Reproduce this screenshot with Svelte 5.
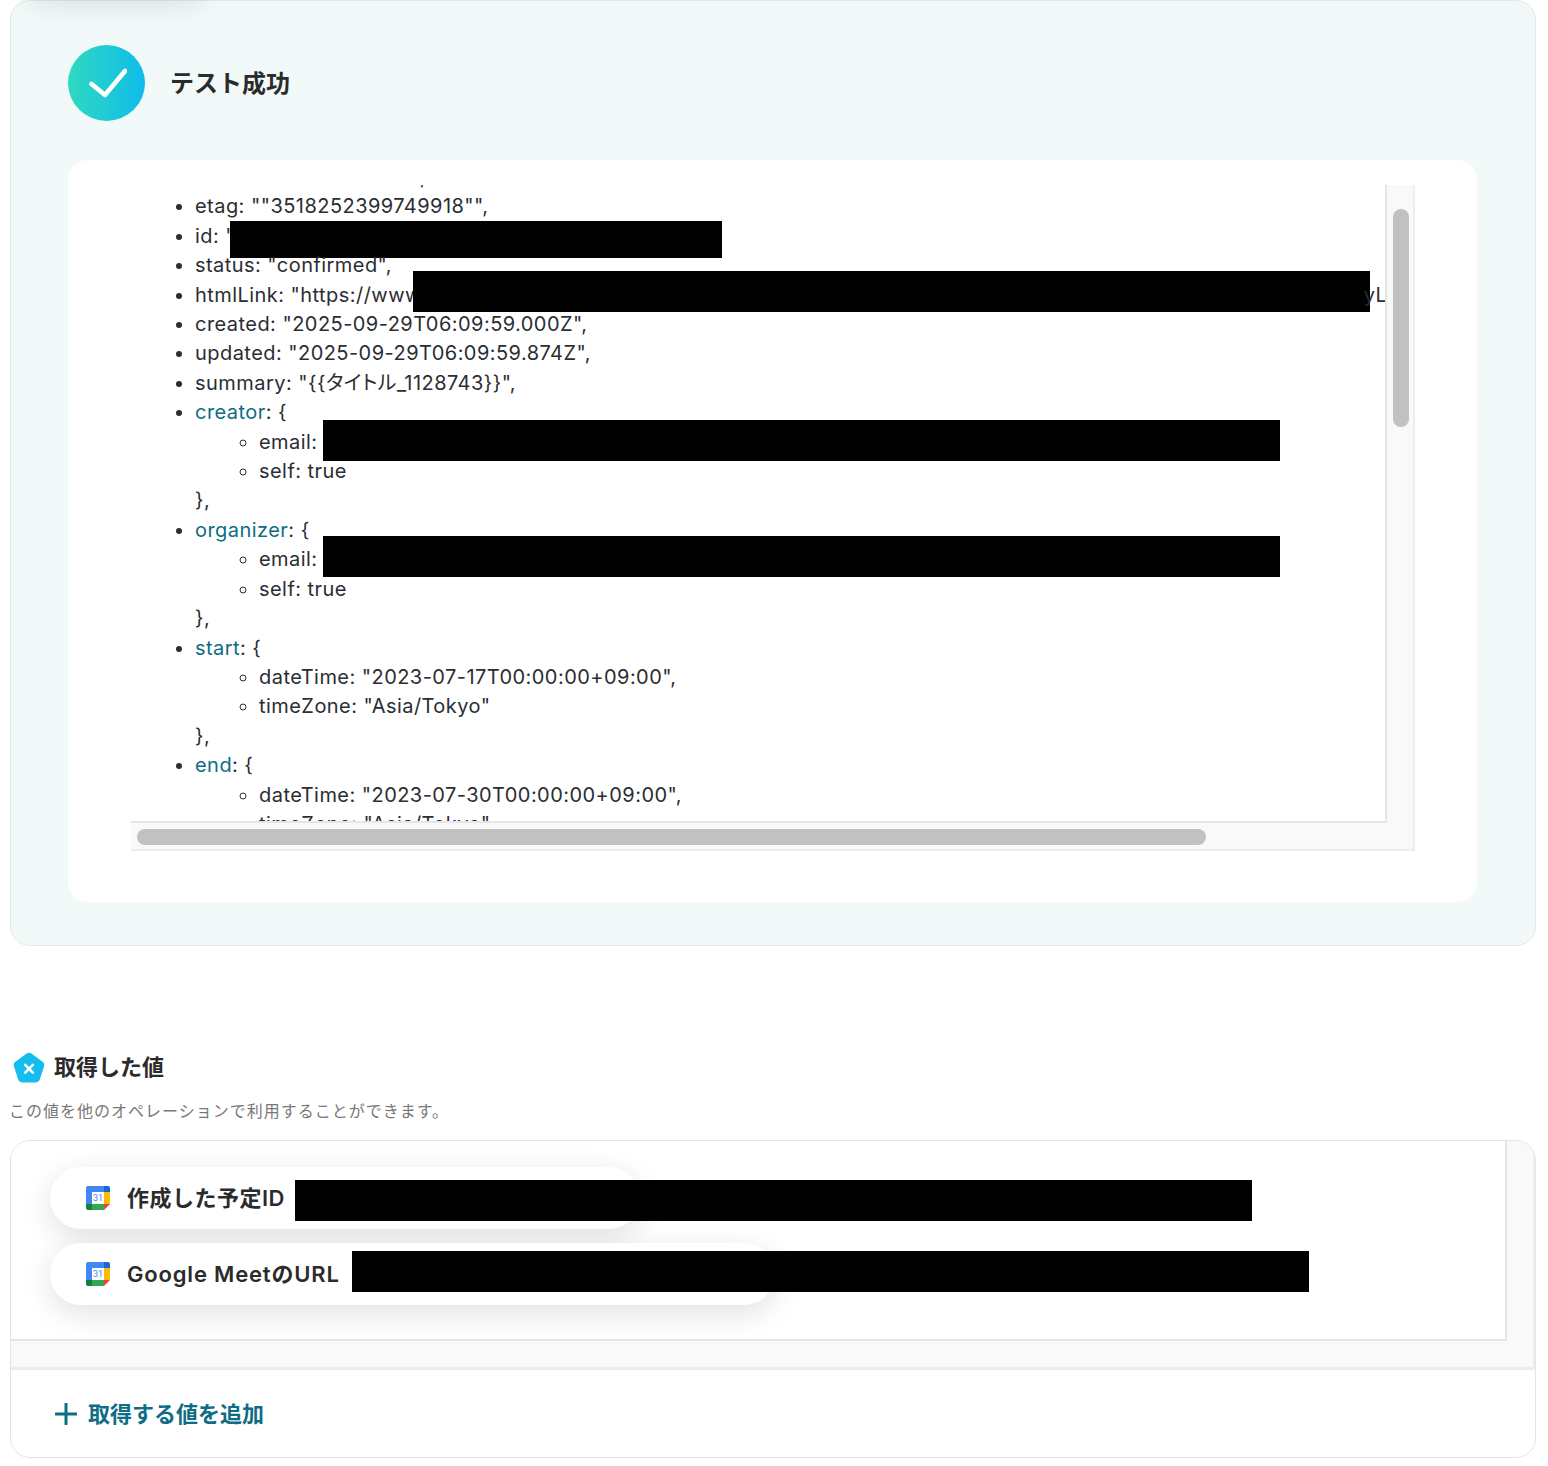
<script>
	const fields = [
		{ label: '作成した予定ID', width: 590, gap: 10, shift: 4, spacing: 0.5 },
		{ label: 'Google MeetのURL', width: 725, gap: 12, shift: -6, spacing: 0.82 }
	];
</script>

<div class="page">
	<section class="result">
		<header class="result-head">
			<span class="check">
				<svg width="40" height="40" viewBox="0 0 40 40" fill="none">
					<path d="M4.5 21 L18 32 L38 8" stroke="#fff" stroke-width="4.6" stroke-linecap="round" stroke-linejoin="round" />
				</svg>
			</span>
			<h2>テスト成功</h2>
		</header>

		<div class="result-body">
			<div class="scrollbox">
				<div class="viewport">
					<ul class="tree">
						<li>kind: "calendar#event",</li>
						<li>etag: ""3518252399749918"",</li>
						<li>id: "<span class="redact id"></span></li>
						<li>status: "confirmed",</li>
						<li>htmlLink: "https://www<span class="redact wide link"></span>yL</li>
						<li>created: "2025-09-29T06:09:59.000Z",</li>
						<li>updated: "2025-09-29T06:09:59.874Z",</li>
						<li>summary: "&#123;&#123;タイトル_1128743&#125;&#125;",</li>
						<li>
							<span class="key">creator</span>: &#123;
							<ul>
								<li>email: <span class="redact wide mail"></span></li>
								<li>self: true</li>
							</ul>
							&#125;,
						</li>
						<li>
							<span class="key">organizer</span>: &#123;
							<ul>
								<li>email: <span class="redact wide mail-low"></span></li>
								<li>self: true</li>
							</ul>
							&#125;,
						</li>
						<li>
							<span class="key">start</span>: &#123;
							<ul>
								<li>dateTime: "2023-07-17T00:00:00+09:00",</li>
								<li>timeZone: "Asia/Tokyo"</li>
							</ul>
							&#125;,
						</li>
						<li>
							<span class="key">end</span>: &#123;
							<ul>
								<li>dateTime: "2023-07-30T00:00:00+09:00",</li>
								<li>timeZone: "Asia/Tokyo"</li>
							</ul>
						</li>
					</ul>
				</div>
				<div class="thumb-v"></div>
				<div class="thumb-h"></div>
			</div>
		</div>
	</section>

	<section class="values">
		<h3>
			<svg width="34" height="34" viewBox="0 0 34 34">
				<path d="M14.6 2.6 a4 4 0 0 1 4.8 0 L30.6 10.8 a4 4 0 0 1 1.5 4.5 L27.8 28.6 a4 4 0 0 1 -3.8 2.8 H10 a4 4 0 0 1 -3.8 -2.8 L1.9 15.3 a4 4 0 0 1 1.5 -4.5 Z" fill="#14bdee" />
				<path d="M13.2 13.8 L20.8 21.6 M20.8 13.8 L13.2 21.6" stroke="#fff" stroke-width="2.6" stroke-linecap="round" />
			</svg>
			<span class="title">取得した値</span>
		</h3>
		<p class="hint">この値を他のオペレーションで利用することができます。</p>

		<div class="box">
			<div class="box-scroll">
				<div class="box-view">
					{#each fields as field}
						<div class="pill" style="width: {field.width}px">
							<svg class="gcal" width="24" height="24" viewBox="0 0 24 24">
								<path d="M6 0 H18 V6 H6 V18 H0 V2 a2 2 0 0 1 2 -2 Z" fill="#4285f4" />
								<path d="M18 0 H22 a2 2 0 0 1 2 2 V6 H18 Z" fill="#1967d2" />
								<rect x="18" y="6" width="6" height="12" fill="#fbbc04" />
								<path d="M6 18 H18 V24 H6 Z" fill="#34a853" />
								<path d="M0 18 H6 V24 H2 a2 2 0 0 1 -2 -2 Z" fill="#188038" />
								<path d="M18 18 H24 L18 24 Z" fill="#ea4335" />
								<rect x="6" y="6" width="12" height="12" fill="#fff" />
								<text x="12" y="15.4" text-anchor="middle" class="gcal-day">31</text>
							</svg>
							<span class="pill-label lift" style="letter-spacing: {field.spacing}px">{field.label}</span>
							<span
								class="redact wide pill-redact"
								style="margin-left: {field.gap}px; margin-top: {Math.max(field.shift, 0)}px; margin-bottom: {Math.max(-field.shift, 0)}px"
							></span>
						</div>
					{/each}
				</div>
			</div>
			<div class="add">
				<svg width="22" height="22" viewBox="0 0 22 22">
					<path d="M11 1 V21 M1 11 H21" stroke="#0d6d84" stroke-width="3" stroke-linecap="round" />
				</svg>
				<span class="lift">取得する値を追加</span>
			</div>
		</div>
	</section>
</div>

<style>
	:global(body) {
		background: #fff;
		font-family: Inter, 'Noto Sans CJK JP', sans-serif;
		color: #2a2e33;
	}

	.page {
		padding: 0 12px 0 10px;
	}

	.result {
		position: relative;
		height: 946px;
		box-sizing: border-box;
		padding: 44px 58px 43px 57px;
		background: #f2faf9;
		border: 1px solid #e3e8e9;
		border-radius: 20px;
	}

	/* shadow of the field sitting just above the fold */
	.result::before {
		content: '';
		position: absolute;
		left: 10px;
		top: -64px;
		width: 190px;
		height: 62px;
		border-radius: 31px;
		box-shadow: 0 6px 28px rgba(0, 0, 0, 0.1);
	}

	.lift {
		padding-bottom: 4px;
	}

	.result-head {
		display: flex;
		align-items: center;
		gap: 25px;
		height: 76px;
	}

	.check {
		display: flex;
		align-items: center;
		justify-content: center;
		width: 77px;
		height: 76px;
		border-radius: 50%;
		background: linear-gradient(90deg, #2fd9bf, #0fbceb);
	}

	h2 {
		margin: 0;
		padding-bottom: 4px;
		font-size: 24px;
		font-weight: 600;
		color: #2b2b2b;
	}

	.result-body {
		margin-top: 39px;
		height: 742px;
		box-sizing: border-box;
		padding: 25px 62px 0 63px;
		background: #fff;
		border-radius: 20px;
	}

	.scrollbox {
		display: grid;
		grid-template-columns: 1fr 26px;
		grid-template-rows: 638px 26px;
		background: #f9f9f9;
		border-right: 2px solid #eee;
		border-bottom: 2px solid #eee;
	}

	.viewport {
		overflow: hidden;
		background: #fff;
		border-right: 2px solid #e6e6e6;
		border-bottom: 2px solid #e6e6e6;
	}

	.tree {
		margin: -22px 0 0;
		padding: 0 0 0 64px;
		white-space: nowrap;
		font-size: 20px;
		line-height: 29.4px;
		letter-spacing: 0.45px;
		font-feature-settings: 'palt';
		color: #2a2e33;
	}

	.tree ul {
		margin: 0;
		padding-left: 64px;
		list-style: circle;
	}

	.key {
		color: #0d6d84;
	}

	.redact {
		display: inline-block;
		vertical-align: middle;
		background: #000;
	}

	.redact.wide {
		width: 957px;
		height: 41px;
	}

	/* the margins leave a 1px margin box, so the bars never push the lines apart */
	.redact.id {
		width: 492px;
		height: 37px;
		margin: -16px 0 -20px -5px;
	}

	.redact.link {
		margin: -25px -6px -15px -9px;
	}

	.redact.mail {
		margin: -23px 0 -17px -1px;
	}

	.redact.mail-low {
		margin: -24px 0 -16px -1px;
	}

	.thumb-v {
		width: 16px;
		height: 218px;
		margin: 24px 0 0 6px;
		background: #c1c1c1;
		border-radius: 8px;
	}

	.thumb-h {
		width: 1069px;
		height: 16px;
		margin: 6px 0 0 6px;
		background: #c1c1c1;
		border-radius: 8px;
	}

	.values {
		margin-top: 105px;
	}

	h3 {
		display: flex;
		align-items: center;
		gap: 8px;
		height: 34px;
		margin: 0 0 0 2px;
		font-size: 22px;
		font-weight: 600;
		line-height: 30px;
		color: #2b2b2b;
	}

	.title {
		padding-bottom: 2px;
	}

	.hint {
		margin: 14px 0 0 -1px;
		font-size: 16px;
		line-height: 24px;
		letter-spacing: 1px;
		color: #777;
	}

	.box {
		margin-top: 17px;
		height: 318px;
		box-sizing: border-box;
		background: #fff;
		border: 1px solid #e4e4e4;
		border-radius: 20px;
		overflow: hidden;
	}

	.box-scroll {
		height: 229px;
		box-sizing: border-box;
		padding-right: 26px;
		background: #f9f9f9;
		border-right: 2px solid #eee;
		border-bottom: 3px solid #ececec;
	}

	.box-view {
		display: flex;
		flex-direction: column;
		gap: 14px;
		height: 200px;
		box-sizing: border-box;
		padding: 26px 0 0 39px;
		background: #fff;
		border-right: 2px solid #e6e6e6;
		border-bottom: 2px solid #e6e6e6;
		overflow: hidden;
	}

	.pill {
		display: flex;
		align-items: center;
		flex: none;
		height: 62px;
		box-sizing: border-box;
		padding-left: 36px;
		background: #fff;
		border-radius: 31px;
		box-shadow: 0 8px 30px rgba(0, 0, 0, 0.12);
	}

	.gcal {
		flex: none;
	}

	.gcal-day {
		font-family: Roboto, sans-serif;
		font-size: 9px;
		fill: #4285f4;
	}

	.pill-label {
		margin-left: 17px;
		font-size: 22px;
		font-weight: 600;
		white-space: nowrap;
		color: #2b2b2b;
	}

	.pill-redact {
		flex: none;
	}

	.add {
		display: flex;
		align-items: center;
		gap: 11px;
		height: 87px;
		padding-left: 44px;
		font-size: 22px;
		font-weight: 600;
		color: #0d6d84;
	}
</style>
